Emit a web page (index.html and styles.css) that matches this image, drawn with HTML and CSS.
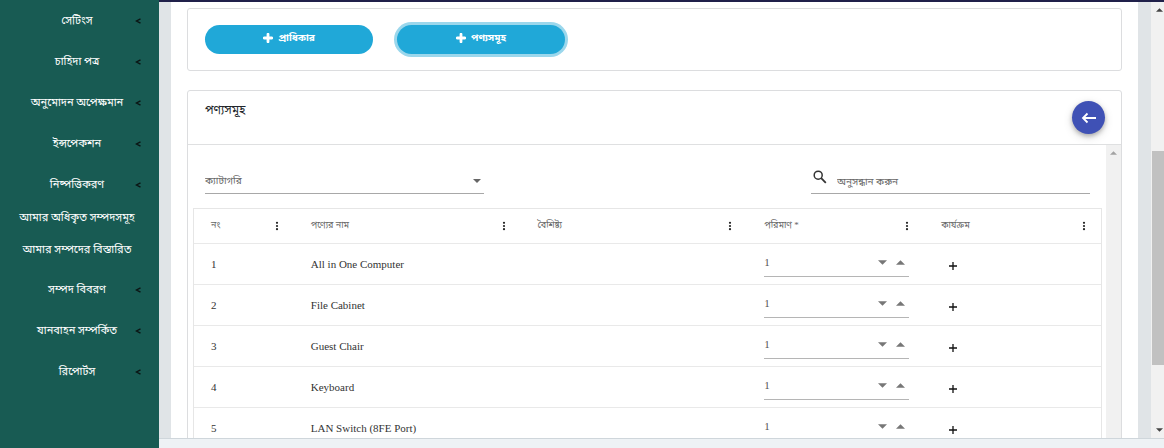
FILE: index.html
```html
<!DOCTYPE html>
<html lang="bn">
<head>
<meta charset="utf-8">
<meta name="viewport" content="width=device-width, initial-scale=1">
<title>পণ্যসমূহ</title>
<link rel="stylesheet" href="styles.css">
</head>
<body>
<svg class="defs" aria-hidden="true">
  <symbol id="chev" viewBox="0 0 8 8"><path d="M6.500 1.800 2.500 4l4 2.200" fill="none" stroke="currentColor" stroke-width="1.400"/></symbol>
  <symbol id="dots" viewBox="0 0 4 10"><circle cx="2" cy="1.800" r="1.100"/><circle cx="2" cy="5" r="1.100"/><circle cx="2" cy="8.200" r="1.100"/></symbol>
  <symbol id="bold-plus" viewBox="0 0 10 10"><path d="M5 1.200v7.600M1.200 5h7.600" fill="none" stroke="currentColor" stroke-width="2.800" stroke-linecap="round"/></symbol>
  <symbol id="plus" viewBox="0 0 10 10"><path d="M5 1v8M1 5h8" fill="none" stroke="currentColor" stroke-width="1.300"/></symbol>
  <symbol id="down" viewBox="0 0 10 5"><path d="M0 0h10L5 5z"/></symbol>
  <symbol id="up" viewBox="0 0 10 5"><path d="M0 5h10L5 0z"/></symbol>
</svg>
<div class="app">
  <nav class="sidebar">
    <a class="nav-item" href="#"><span>সেটিংস</span><svg class="chev"><use href="#chev"/></svg></a>
    <a class="nav-item" href="#"><span>চাহিদা পত্র</span><svg class="chev"><use href="#chev"/></svg></a>
    <a class="nav-item" href="#"><span>অনুমোদন অপেক্ষমান</span><svg class="chev"><use href="#chev"/></svg></a>
    <a class="nav-item" href="#"><span>ইন্সপেকশন</span><svg class="chev"><use href="#chev"/></svg></a>
    <a class="nav-item" href="#"><span>নিষ্পত্তিকরণ</span><svg class="chev"><use href="#chev"/></svg></a>
    <a class="nav-item nav-leaf" href="#"><span>আমার অধিকৃত সম্পদসমূহ</span></a>
    <a class="nav-item nav-leaf" href="#"><span>আমার সম্পদের বিস্তারিত</span></a>
    <a class="nav-item" href="#"><span>সম্পদ বিবরণ</span><svg class="chev"><use href="#chev"/></svg></a>
    <a class="nav-item" href="#"><span>যানবাহন সম্পর্কিত</span><svg class="chev"><use href="#chev"/></svg></a>
    <a class="nav-item" href="#"><span>রিপোর্টস</span><svg class="chev"><use href="#chev"/></svg></a>
  </nav>
  <div class="main">
    <div class="content">
      <main class="panel">
        <section class="card actions">
          <button class="pill" type="button"><svg><use href="#bold-plus"/></svg>প্রাধিকার</button>
          <button class="pill pill-focus" type="button"><svg><use href="#bold-plus"/></svg>পণ্যসমূহ</button>
        </section>
        <section class="card products">
          <header class="card-head">
            <h1>পণ্যসমূহ</h1>
            <button class="fab" type="button" aria-label="ফিরে যান"><svg viewBox="0 0 16 12"><path d="M15 6H2M6.500 1.500 2 6l4.500 4.500" fill="none" stroke="currentColor" stroke-width="1.800"/></svg></button>
          </header>
          <div class="card-body">
            <div class="scroll-area">
              <div class="filters">
                <div class="field">
                  <select aria-label="ক্যাটাগরি"><option>ক্যাটাগরি</option></select>
                  <svg class="caret"><use href="#down"/></svg>
                </div>
                <div class="field">
                  <svg class="search-icon" viewBox="0 0 14 14"><circle cx="5.200" cy="5.200" r="4" fill="none" stroke="currentColor" stroke-width="1.500"/><path d="m8.200 8.200 4.600 4.600" stroke="currentColor" stroke-width="1.800"/></svg>
                  <input type="text" placeholder="অনুসন্ধান করুন" aria-label="অনুসন্ধান করুন">
                </div>
              </div>
              <table>
                <colgroup><col class="c-no"><col class="c-name"><col class="c-name"><col class="c-qty"><col></colgroup>
                <thead>
                  <tr>
                    <th><div class="th">নং<svg><use href="#dots"/></svg></div></th>
                    <th><div class="th">পণ্যের নাম<svg><use href="#dots"/></svg></div></th>
                    <th><div class="th">বৈশিষ্ট্য<svg><use href="#dots"/></svg></div></th>
                    <th><div class="th">পরিমাণ *<svg><use href="#dots"/></svg></div></th>
                    <th><div class="th">কার্যক্রম<svg><use href="#dots"/></svg></div></th>
                  </tr>
                </thead>
                <tbody>
                  <tr><td>1</td><td>All in One Computer</td><td></td><td><div class="qty"><input type="text" value="1" aria-label="পরিমাণ"><button type="button" aria-label="কমান"><svg><use href="#down"/></svg></button><button type="button" aria-label="বাড়ান"><svg><use href="#up"/></svg></button></div></td><td><button class="add" type="button" aria-label="যোগ করুন"><svg><use href="#plus"/></svg></button></td></tr>
                  <tr><td>2</td><td>File Cabinet</td><td></td><td><div class="qty"><input type="text" value="1" aria-label="পরিমাণ"><button type="button" aria-label="কমান"><svg><use href="#down"/></svg></button><button type="button" aria-label="বাড়ান"><svg><use href="#up"/></svg></button></div></td><td><button class="add" type="button" aria-label="যোগ করুন"><svg><use href="#plus"/></svg></button></td></tr>
                  <tr><td>3</td><td>Guest Chair</td><td></td><td><div class="qty"><input type="text" value="1" aria-label="পরিমাণ"><button type="button" aria-label="কমান"><svg><use href="#down"/></svg></button><button type="button" aria-label="বাড়ান"><svg><use href="#up"/></svg></button></div></td><td><button class="add" type="button" aria-label="যোগ করুন"><svg><use href="#plus"/></svg></button></td></tr>
                  <tr><td>4</td><td>Keyboard</td><td></td><td><div class="qty"><input type="text" value="1" aria-label="পরিমাণ"><button type="button" aria-label="কমান"><svg><use href="#down"/></svg></button><button type="button" aria-label="বাড়ান"><svg><use href="#up"/></svg></button></div></td><td><button class="add" type="button" aria-label="যোগ করুন"><svg><use href="#plus"/></svg></button></td></tr>
                  <tr><td>5</td><td>LAN Switch (8FE Port)</td><td></td><td><div class="qty"><input type="text" value="1" aria-label="পরিমাণ"><button type="button" aria-label="কমান"><svg><use href="#down"/></svg></button><button type="button" aria-label="বাড়ান"><svg><use href="#up"/></svg></button></div></td><td><button class="add" type="button" aria-label="যোগ করুন"><svg><use href="#plus"/></svg></button></td></tr>
                </tbody>
              </table>
            </div>
            <div class="inner-bar"><svg><use href="#up"/></svg></div>
          </div>
        </section>
      </main>
      <div class="page-bar">
        <svg><use href="#up"/></svg>
        <div class="track"><div class="thumb"></div></div>
        <svg><use href="#down"/></svg>
      </div>
    </div>
    <footer class="footer"></footer>
  </div>
</div>
</body>
</html>
```
FILE: styles.css
```css
* { box-sizing: border-box; }

body {
  margin: 0;
  font-family: "Liberation Serif", "Noto Sans Bengali", "Noto Sans", serif;
  font-size: 11px;
  color: #333;
  background: #fff;
}

button, input, select { font: inherit; color: inherit; }
button { border: 0; padding: 0; background: none; cursor: pointer; }
svg { display: block; fill: currentColor; flex: none; }
.defs { position: absolute; width: 0; height: 0; }

.app { display: flex; height: 100vh; overflow: hidden; }

/* Sidebar */
.sidebar { flex: none; width: 159px; background: #185b53; }
.nav-item {
  display: flex;
  align-items: center;
  height: 41px;
  padding: 0 17px 0 20px;
  color: #fff;
  font-size: 11px;
  text-decoration: none;
  white-space: nowrap;
}
.nav-item span { flex: 1; display: flex; justify-content: center; width: 0; }
.nav-leaf { height: 32px; padding: 0 25px 6px 20px; }
.chev { width: 8px; height: 8px; color: #0b1413; }

/* Main column */
.main { flex: 1; min-width: 0; display: flex; flex-direction: column; border-top: 2px solid #20204a; }
.content { flex: 1; min-height: 0; display: flex; overflow: hidden; padding-left: 12px; background: #e0e4e7; }
.panel { flex: 1; min-width: 0; padding: 6px 16px 0; margin-right: 13px; background: #fff; }
.footer { flex: none; height: 10px; background: #eef2f5; border-top: 1px solid #cfd6db; }

.card { border: 1px solid #dcdddf; border-radius: 3px; background: #fff; }
.actions { display: flex; gap: 24px; padding: 16px 17px; margin-bottom: 19px; }
.pill {
  display: flex;
  align-items: center;
  justify-content: center;
  gap: 5px;
  width: 168px;
  height: 29px;
  padding-bottom: 3px;
  border-radius: 15px;
  background: #20a8d8;
  color: #fff;
  font-size: 10px;
  font-weight: 700;
}
.pill svg { width: 10px; height: 10px; }
.pill-focus { box-shadow: 0 0 0 3px #9bd7ec; }

.card-head {
  display: flex;
  justify-content: space-between;
  height: 54px;
  padding: 10px 16px 10px 17px;
  border-bottom: 1px solid #dfe0e1;
}
.card-head h1 { margin: 0; font-size: 12px; font-weight: 400; line-height: 18px; color: #212529; }
.fab {
  display: grid;
  place-items: center;
  width: 33px;
  height: 33px;
  border-radius: 50%;
  background: #3f51b5;
  color: #fff;
  box-shadow: 0 2px 4px rgba(0, 0, 0, .25), 0 3px 10px rgba(0, 0, 0, .15);
}
.fab svg { width: 16px; height: 12px; }

.card-body { display: flex; }
.scroll-area { flex: 1; min-width: 0; padding: 24px 4px 0 5px; }
.inner-bar { width: 15px; padding: 6px 4px; background: #f1f1f1; color: #a3a3a3; }
.inner-bar svg { width: 7px; height: 4px; }

/* Filters */
.filters { display: flex; justify-content: space-between; padding: 0 12px; margin-bottom: 14px; }
.field { display: flex; align-items: center; width: 279px; height: 25px; border-bottom: 1px solid #a8a8a8; color: #666; font-size: 10px; }
.field select, .field input { flex: 1; min-width: 0; height: 22px; line-height: 20px; padding: 0; border: 0; outline: 0; background: none; appearance: none; }
.field input::placeholder { color: #666; opacity: 1; line-height: 20px; }
.caret { width: 8px; height: 4px; margin-right: 3px; }
.search-icon { width: 14px; height: 14px; margin: 0 10px 8px 2px; color: #333; }

/* Table */
table { width: 100%; table-layout: fixed; border-collapse: separate; border-spacing: 0; border: 1px solid #e6e6e6; border-bottom: 0; }
.c-no { width: 11%; }
.c-name { width: 25%; }
.c-qty { width: 19.5%; }
th, td { padding: 0 15px 0 17px; text-align: left; border-bottom: 1px solid #e9e9e9; }
th { height: 35px; font-size: 9px; font-weight: 400; color: #666; }
td { height: 41px; }
.th { display: flex; align-items: center; justify-content: space-between; white-space: nowrap; }
.th svg { width: 4px; height: 10px; color: #222; }
.qty { display: flex; align-items: center; gap: 7px; height: 26px; padding-bottom: 3px; border-bottom: 1px solid #b5b5b5; color: #777; }
.qty input { flex: 1; min-width: 0; padding: 0; border: 0; outline: 0; background: none; color: #555; }
.qty button { padding: 3px 1px; }
.qty svg { width: 9px; height: 5px; }
.qty button:last-child { margin-right: 3px; }
.add { display: block; padding: 4px 7px 0; color: #111; }
.add svg { width: 10px; height: 10px; }

/* Page scroll bar */
.page-bar { display: flex; flex-direction: column; align-items: center; width: 13px; padding: 6px 0; background: #f1f1f1; color: #444; }
.page-bar svg { width: 7px; height: 4px; margin-left: 3px; }
.track { flex: 1; align-self: stretch; padding: 0 0 0 1px; display: grid; grid-template-rows: 33fr 51fr 15fr; }
.thumb { grid-row: 2; background: #c1c1c1; }
```
